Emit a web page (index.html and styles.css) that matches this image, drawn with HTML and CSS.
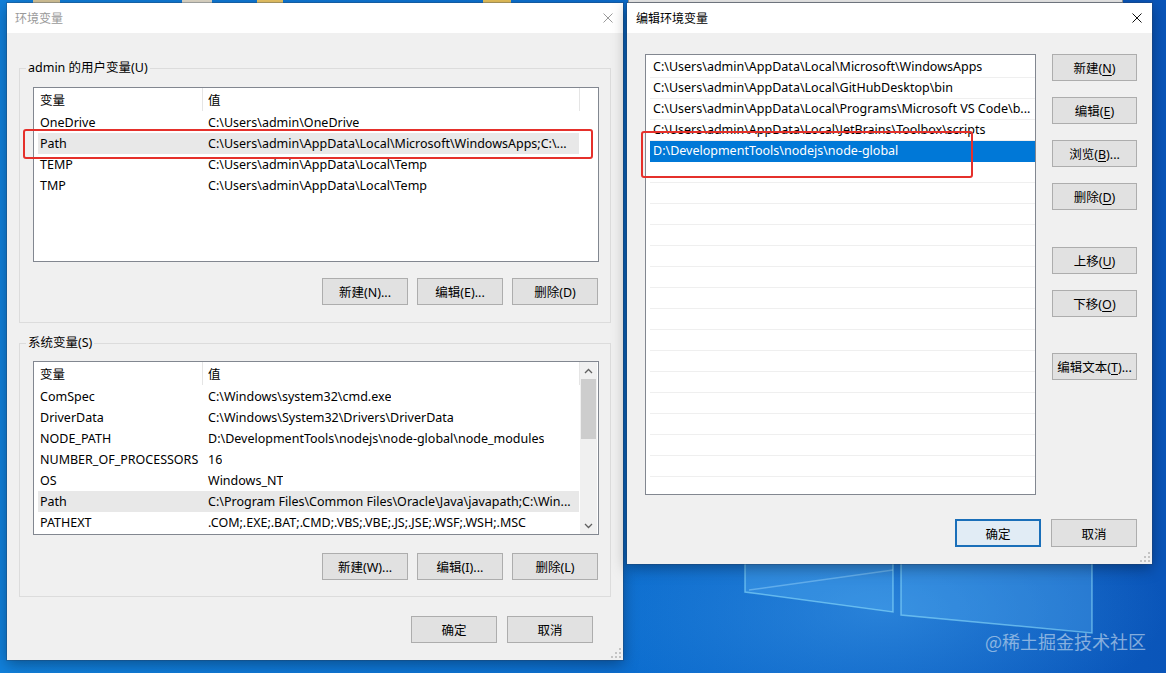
FILE: index.html
```html
<!DOCTYPE html>
<html lang="zh-CN">
<head>
<meta charset="utf-8">
<title>环境变量</title>
<link rel="stylesheet" href="styles.css">
</head>
<body>
<main class="desktop">
  <span class="icon-frag frag-1"></span>
  <span class="icon-frag frag-2"></span>
  <span class="icon-frag frag-3"></span>
  <span class="icon-frag frag-4"></span>

  <svg class="logo" width="420" height="150" viewBox="0 0 420 150">
    <polygon class="pane" points="45,0 193,0 193,112 45,92"/>
    <polygon class="pane" points="201,0 392,0 392,133 201,115"/>
    <line class="beam" x1="49" y1="90" x2="193" y2="70"/>
  </svg>

  <div class="bg-window"></div>

  <section class="window env-window">
    <header class="titlebar is-inactive">
      <span class="title">环境变量</span>
      <svg class="close-icon" width="10" height="10" viewBox="0 0 10 10"><path d="M0.5 0.5L9.5 9.5M9.5 0.5L0.5 9.5"/></svg>
    </header>
    <div class="env-body">
      <fieldset class="group">
        <legend>admin 的用户变量(U)</legend>
        <div class="listview">
          <div class="lv-main">
            <div class="lv-head"><span class="h1">变量</span><span class="h2">值</span></div>
            <div class="lv-row"><span class="c1">OneDrive</span><span class="c2">C:\Users\admin\OneDrive</span></div>
            <div class="lv-row is-selected"><span class="c1">Path</span><span class="c2">C:\Users\admin\AppData\Local\Microsoft\WindowsApps;C:\...</span></div>
            <div class="lv-row"><span class="c1">TEMP</span><span class="c2">C:\Users\admin\AppData\Local\Temp</span></div>
            <div class="lv-row"><span class="c1">TMP</span><span class="c2">C:\Users\admin\AppData\Local\Temp</span></div>
          </div>
        </div>
        <div class="btn-row">
          <button class="btn">新建(N)...</button>
          <button class="btn">编辑(E)...</button>
          <button class="btn">删除(D)</button>
        </div>
      </fieldset>

      <fieldset class="group group-sys">
        <legend>系统变量(S)</legend>
        <div class="listview listview-sys">
          <div class="lv-main">
            <div class="lv-head"><span class="h1">变量</span><span class="h2">值</span></div>
            <div class="lv-row"><span class="c1">ComSpec</span><span class="c2">C:\Windows\system32\cmd.exe</span></div>
            <div class="lv-row"><span class="c1">DriverData</span><span class="c2">C:\Windows\System32\Drivers\DriverData</span></div>
            <div class="lv-row"><span class="c1">NODE_PATH</span><span class="c2">D:\DevelopmentTools\nodejs\node-global\node_modules</span></div>
            <div class="lv-row"><span class="c1">NUMBER_OF_PROCESSORS</span><span class="c2">16</span></div>
            <div class="lv-row"><span class="c1">OS</span><span class="c2">Windows_NT</span></div>
            <div class="lv-row is-selected"><span class="c1">Path</span><span class="c2">C:\Program Files\Common Files\Oracle\Java\javapath;C:\Win...</span></div>
            <div class="lv-row"><span class="c1">PATHEXT</span><span class="c2">.COM;.EXE;.BAT;.CMD;.VBS;.VBE;.JS;.JSE;.WSF;.WSH;.MSC</span></div>
          </div>
          <div class="scrollbar">
            <span class="sb-arrow"><svg width="9" height="6" viewBox="0 0 9 6"><path d="M1 5L4.5 1.5L8 5"/></svg></span>
            <span class="sb-track"><span class="sb-thumb"></span></span>
            <span class="sb-arrow"><svg width="9" height="6" viewBox="0 0 9 6"><path d="M1 1L4.5 4.5L8 1"/></svg></span>
          </div>
        </div>
        <div class="btn-row">
          <button class="btn">新建(W)...</button>
          <button class="btn">编辑(I)...</button>
          <button class="btn">删除(L)</button>
        </div>
      </fieldset>

      <div class="dlg-footer">
        <button class="btn">确定</button>
        <button class="btn">取消</button>
      </div>
    </div>
    <svg class="grip" width="10" height="10" viewBox="0 0 10 10"><path d="M8 0h2v2h-2zM8 4h2v2h-2zM4 4h2v2h-2zM8 8h2v2h-2zM4 8h2v2h-2zM0 8h2v2h-2z"/></svg>
  </section>

  <section class="window edit-window">
    <header class="titlebar">
      <span class="title">编辑环境变量</span>
      <svg class="close-icon" width="10" height="10" viewBox="0 0 10 10"><path d="M0.5 0.5L9.5 9.5M9.5 0.5L0.5 9.5"/></svg>
    </header>
    <div class="edit-body">
      <div class="edit-main">
        <div class="path-list">
          <div class="p-row">C:\Users\admin\AppData\Local\Microsoft\WindowsApps</div>
          <div class="p-row">C:\Users\admin\AppData\Local\GitHubDesktop\bin</div>
          <div class="p-row">C:\Users\admin\AppData\Local\Programs\Microsoft VS Code\b...</div>
          <div class="p-row">C:\Users\admin\AppData\Local\JetBrains\Toolbox\scripts</div>
          <div class="p-row is-active">D:\DevelopmentTools\nodejs\node-global</div>
          <div class="p-row"></div>
          <div class="p-row"></div>
          <div class="p-row"></div>
          <div class="p-row"></div>
          <div class="p-row"></div>
          <div class="p-row"></div>
          <div class="p-row"></div>
          <div class="p-row"></div>
          <div class="p-row"></div>
          <div class="p-row"></div>
          <div class="p-row"></div>
          <div class="p-row"></div>
          <div class="p-row"></div>
          <div class="p-row"></div>
          <div class="p-row"></div>
          <div class="p-row"></div>
        </div>
        <div class="side-btns">
          <button class="btn">新建(<u>N</u>)</button>
          <button class="btn">编辑(<u>E</u>)</button>
          <button class="btn">浏览(<u>B</u>)...</button>
          <button class="btn">删除(<u>D</u>)</button>
          <button class="btn gap-before">上移(<u>U</u>)</button>
          <button class="btn">下移(<u>O</u>)</button>
          <button class="btn gap-before-2">编辑文本(<u>T</u>)...</button>
        </div>
      </div>
      <div class="dlg-footer edit-footer">
        <button class="btn btn-default">确定</button>
        <button class="btn">取消</button>
      </div>
    </div>
    <svg class="grip" width="10" height="10" viewBox="0 0 10 10"><path d="M8 0h2v2h-2zM8 4h2v2h-2zM4 4h2v2h-2zM8 8h2v2h-2zM4 8h2v2h-2zM0 8h2v2h-2z"/></svg>
  </section>

  <div class="annot annot-user"></div>
  <div class="annot annot-edit"></div>
  <div class="watermark">@稀土掘金技术社区</div>
</main>
</body>
</html>
```

FILE: styles.css
```css
* { box-sizing: border-box; }
html, body { margin: 0; padding: 0; }
body {
  width: 1166px;
  height: 673px;
  overflow: hidden;
  font-family: "Noto Sans", "Noto Sans CJK SC", sans-serif;
  font-size: 12.5px;
  color: #000;
}

.desktop {
  position: relative;
  width: 1166px;
  height: 673px;
  overflow: hidden;
  background:
    radial-gradient(ellipse 380px 160px at 880px 610px, rgba(70, 160, 235, 0.5), rgba(70, 160, 235, 0) 75%),
    linear-gradient(90deg, #1180db 0%, #0d72d3 45%, #0b63c6 75%, #0a55b9 100%);
}

.icon-frag { position: absolute; top: 0; height: 3px; }
.frag-1 { left: 33px; width: 27px; background: #d8c79a; }
.frag-2 { left: 182px; width: 30px; background: #e3dccb; }
.frag-3 { left: 257px; width: 26px; background: #ecc766; }
.frag-4 { left: 483px; width: 28px; background: #e9c35c; }

.logo { position: absolute; left: 700px; top: 500px; }
.logo .pane { fill: rgba(100, 190, 250, 0.28); stroke: rgba(150, 230, 255, 0.55); stroke-width: 1.5; }
.logo .beam { stroke: rgba(170, 225, 255, 0.4); stroke-width: 1.5; }

.bg-window {
  position: absolute;
  left: 628px;
  top: -40px;
  width: 495px;
  height: 43px;
  background: #eeeeee;
  border: 1px solid #9a9a9a;
}

/* windows */
.window {
  position: absolute;
  display: flex;
  flex-direction: column;
  background: #f0f0f0;
  box-shadow: 0 0 0 1px rgba(40, 60, 90, 0.3), 0 4px 14px rgba(0, 0, 0, 0.35);
}
.env-window { left: 7px; top: 3px; width: 616px; height: 657px; }
.edit-window { left: 627px; top: 3px; width: 525px; height: 561px; }

.titlebar {
  flex: none;
  height: 30px;
  background: #fff;
  display: flex;
  align-items: center;
  justify-content: space-between;
  padding: 0 10px 0 8px;
}
.edit-window .titlebar { padding-left: 9px; }
.title { font-size: 12px; line-height: 16px; font-family: "Noto Sans CJK SC", sans-serif; }
.is-inactive .title { color: #9a9a9a; }
.close-icon { stroke: #111; stroke-width: 1; fill: none; }
.is-inactive .close-icon { stroke: #9a9a9a; }

.grip { position: absolute; right: 2px; bottom: 2px; fill: #c4c4c4; }

/* left dialog body */
.env-body { padding: 26px 12px 0; }

.group {
  margin: 0;
  min-width: 0;
  border: 1px solid #dcdcdc;
  padding: 10px 11px 17px 6px;
}
.group legend { padding: 0 2px; line-height: 18px; font-size: 12.5px; }
.group-sys { margin-top: 11px; padding-top: 9px; padding-bottom: 16px; }

.listview {
  display: flex;
  width: 566px;
  height: 175px;
  margin-left: 7px;
  background: #fff;
  border: 1px solid #828790;
  overflow: hidden;
}
.listview-sys { height: 174px; }
.lv-main { width: 546px; flex: none; }

.lv-head { display: flex; height: 24px; }
.lv-head span { display: flex; align-items: center; height: 23px; }
.h1 { width: 169px; flex: none; padding-left: 6px; border-right: 1px solid #e5e5e5; }
.h2 { flex: 1; padding-left: 5px; border-right: 1px solid #e5e5e5; }

.lv-row {
  display: flex;
  align-items: center;
  height: 21px;
  width: 541px;
  margin-left: 4px;
  white-space: nowrap;
}
.lv-row.is-selected { background: #e8e8e8; }
.c1 { width: 164px; flex: none; padding-left: 2px; overflow: hidden; }
.c2 { padding-left: 6px; overflow: hidden; }

.scrollbar {
  width: 17px;
  flex: none;
  display: flex;
  flex-direction: column;
  background: #f0f0f0;
}
.sb-arrow { flex: none; height: 17px; display: flex; align-items: center; justify-content: center; }
.sb-arrow svg { fill: none; stroke: #606060; stroke-width: 1.3; }
.sb-track { flex: 1; padding: 0 1px; }
.sb-thumb { display: block; height: 60px; background: #cdcdcd; }

.btn {
  width: 86px;
  height: 27px;
  margin: 0;
  padding: 0;
  font-family: "Noto Sans", "Noto Sans CJK SC", sans-serif;
  font-size: 12.5px;
  color: #000;
  background: #e1e1e1;
  border: 1px solid #adadad;
  border-radius: 0;
  white-space: nowrap;
}
.btn u { text-underline-offset: 2px; }
.btn-default { border: 2px solid #1a6fb9; background: #e1ecf5; }

.btn-row {
  display: flex;
  justify-content: flex-end;
  gap: 9px;
  margin-top: 16px;
  padding-right: 1px;
}
.group-sys .btn-row { margin-top: 18px; }

.dlg-footer {
  display: flex;
  justify-content: flex-end;
  gap: 10px;
  margin-top: 19px;
  padding-right: 18px;
}

/* right dialog body */
.edit-body {
  flex: 1;
  display: flex;
  flex-direction: column;
  padding: 21px 15px 0 18px;
}
.edit-main { display: flex; align-items: flex-start; }
.path-list {
  width: 391px;
  height: 441px;
  flex: none;
  background: #fff;
  border: 1px solid #828790;
  overflow: hidden;
  padding-top: 2px;
}
.p-row {
  height: 21px;
  margin-left: 4px;
  padding-left: 3px;
  line-height: 20px;
  border-bottom: 1px solid #efefef;
  white-space: nowrap;
  overflow: hidden;
}
.p-row.is-active { background: #0078d7; color: #fff; border-bottom-color: #0078d7; }

.side-btns { display: flex; flex-direction: column; gap: 16px; margin-left: 16px; }
.side-btns .btn { width: 85px; }
.side-btns .gap-before { margin-top: 21px; }
.side-btns .gap-before-2 { margin-top: 20px; }

.edit-footer { margin-top: 24px; padding-right: 0; }
.edit-footer .btn { height: 28px; }

/* annotations */
.annot {
  position: absolute;
  border: 2.5px solid #e5302b;
  border-radius: 3px;
}
.annot-user { left: 23px; top: 129px; width: 570px; height: 30px; }
.annot-edit { left: 641px; top: 131px; width: 332px; height: 47px; }

.watermark {
  position: absolute;
  left: 985px;
  top: 629px;
  font-family: "Noto Sans CJK SC", sans-serif;
  font-size: 18px;
  line-height: 24px;
  color: rgba(215, 228, 242, 0.6);
}
```
